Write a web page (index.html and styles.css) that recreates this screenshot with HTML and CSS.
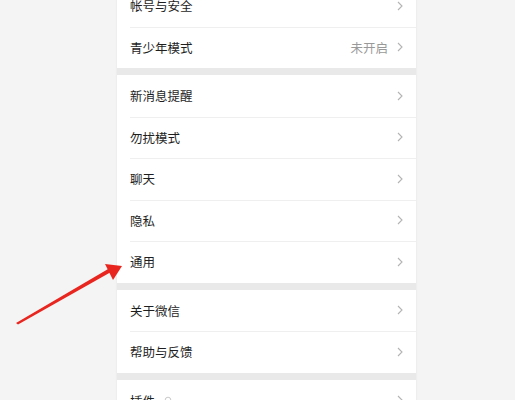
FILE: index.html
```html
<!DOCTYPE html>
<html lang="zh-CN">
<head>
  <meta charset="UTF-8" />
  <meta name="viewport" content="width=device-width, initial-scale=1.0"/>
  <title>设置</title>
  <link rel="stylesheet" href="styles.css">
</head>
<body>

  <div class="settings">
    <div class="group">
      <div class="row"><span class="label">帐号与安全</span><svg class="chev" viewBox="0 0 6 10"><polyline points="1,1 5,5 1,9"/></svg></div>
      <div class="row"><span class="label">青少年模式</span><span class="value">未开启</span><svg class="chev" viewBox="0 0 6 10"><polyline points="1,1 5,5 1,9"/></svg></div>
    </div>

    <div class="group">
      <div class="row"><span class="label">新消息提醒</span><svg class="chev" viewBox="0 0 6 10"><polyline points="1,1 5,5 1,9"/></svg></div>
      <div class="row"><span class="label">勿扰模式</span><svg class="chev" viewBox="0 0 6 10"><polyline points="1,1 5,5 1,9"/></svg></div>
      <div class="row"><span class="label">聊天</span><svg class="chev" viewBox="0 0 6 10"><polyline points="1,1 5,5 1,9"/></svg></div>
      <div class="row"><span class="label">隐私</span><svg class="chev" viewBox="0 0 6 10"><polyline points="1,1 5,5 1,9"/></svg></div>
      <div class="row"><span class="label">通用</span><svg class="chev" viewBox="0 0 6 10"><polyline points="1,1 5,5 1,9"/></svg></div>
    </div>

    <div class="group">
      <div class="row"><span class="label">关于微信</span><svg class="chev" viewBox="0 0 6 10"><polyline points="1,1 5,5 1,9"/></svg></div>
      <div class="row"><span class="label">帮助与反馈</span><svg class="chev" viewBox="0 0 6 10"><polyline points="1,1 5,5 1,9"/></svg></div>
    </div>

    <div class="group">
      <div class="row"><span class="label">插件</span><svg class="plug" viewBox="0 0 10 10"><circle cx="5" cy="5" r="3.5"/></svg><svg class="chev" viewBox="0 0 6 10"><polyline points="1,1 5,5 1,9"/></svg></div>
    </div>
  </div>

  <!-- red annotation arrow pointing at 通用 -->
  <svg class="pointer" width="515" height="400" viewBox="0 0 515 400">
    <polygon class="shaft" points="16,323 18,324.5 111,272 109,268.5"/>
    <polygon class="head" points="122,266 105,264 113,280"/>
  </svg>

</body>
</html>
```

FILE: styles.css
```css
body {
  margin: 0;
  background: #f4f4f4;
  font-family: "Noto Sans CJK SC", "Noto Sans", sans-serif;
  overflow: hidden;
}
.settings {
  width: 299px;
  margin: -15px 0 0 117px;
  background: #e9e9e9;
  box-shadow: 0 0 2px rgba(0, 0, 0, 0.08);
}
.group {
  background: #fff;
}
.group + .group {
  margin-top: 7px;
}
.row {
  height: 41.5px;
  display: flex;
  align-items: center;
  padding: 0 13px 0 13px;
  box-sizing: border-box;
  position: relative;
}
.row + .row::before {
  content: "";
  position: absolute;
  left: 13px;
  right: 0;
  top: 0;
  border-top: 1px solid #efefef;
}
.label {
  font-size: 12.5px;
  color: #1e1e1e;
  flex: 1;
}
.value {
  font-size: 12.5px;
  color: #999;
  margin-right: 9px;
}
.chev {
  width: 6px;
  height: 10px;
  fill: none;
  stroke: #b4b4b4;
  stroke-width: 1.1;
}
.plug {
  width: 8px;
  height: 8px;
  fill: none;
  stroke: #bbb;
  stroke-width: 1;
  position: absolute;
  left: 47px;
}
.pointer {
  position: absolute;
  left: 0;
  top: 0;
  pointer-events: none;
}
.shaft, .head {
  fill: #e8261f;
}
```
